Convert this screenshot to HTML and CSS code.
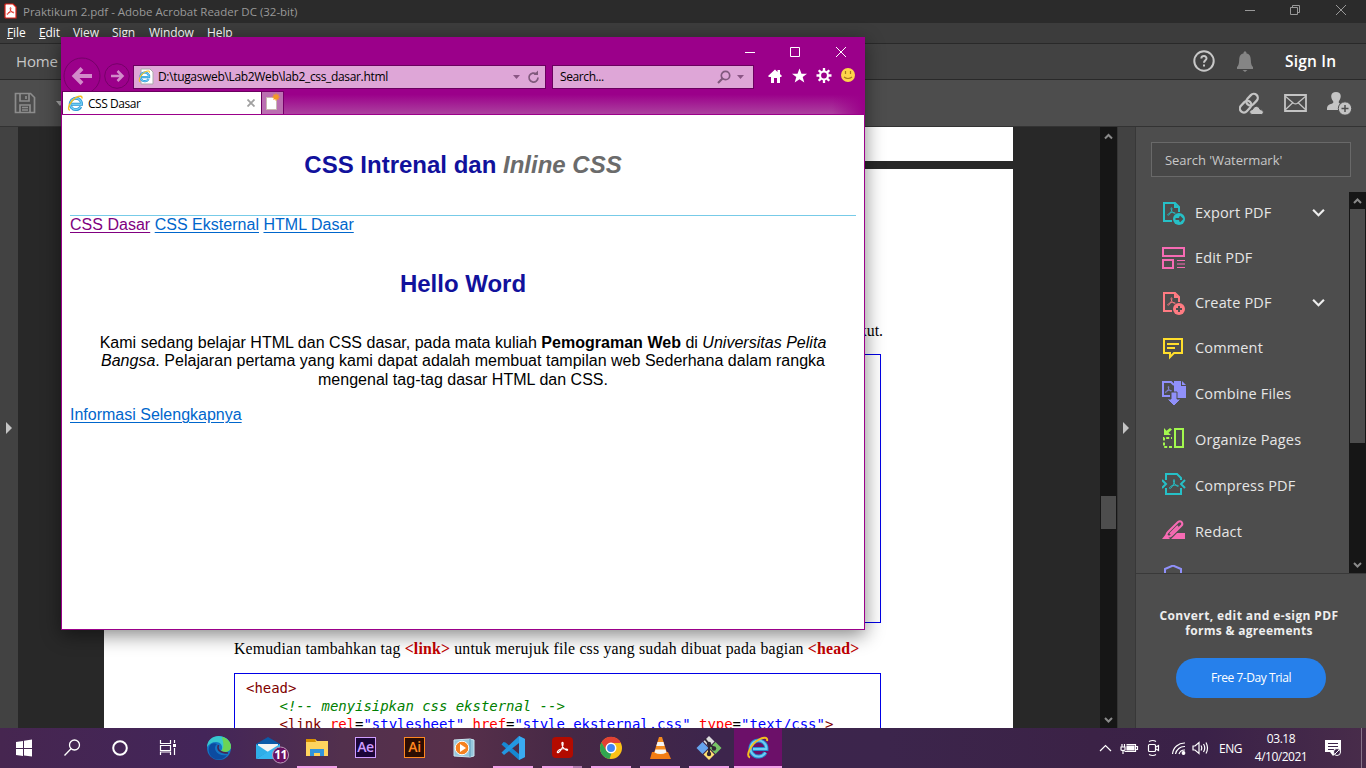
FILE: index.html
```html
<!DOCTYPE html>
<html lang="id">
<head>
<meta charset="utf-8">
<title>Desktop</title>
<link rel="stylesheet" href="styles.css">
</head>
<body>
<svg class="defs" width="0" height="0">
  <symbol id="ie" viewBox="0 0 24 24">
    <path d="M7 13h13.500A8 8 0 1 0 19.500 16.500" fill="none" stroke="#2590d2" stroke-width="4"/>
    <path d="M7 13h13.500A8 8 0 1 0 19.500 16.500" fill="none" stroke="#6fcdf4" stroke-width="2"/>
    <path d="M4 21.500C-1 20 5 8 13 3.500 18 .8 22 1 21 5" fill="none" stroke="#f5bf1e" stroke-width="2"/>
  </symbol>
  <symbol id="acro" viewBox="0 0 16 16">
    <path d="M2.500 12.500c1.500-2.500 5.200-3.800 10-2.800 1.800.5 1 1.800-.6 1C9.500 9.500 7.500 6.500 7.300 3.500c0-1.400 1.500-1.400 1.400.2C8.500 7 6 11.500 3.800 13.300c-.9.5-1.700.1-1.300-.8z" fill="none" stroke="currentColor" stroke-width="1.200"/>
  </symbol>
</svg>

<div class="titlebar">
  <svg width="13" height="16" viewBox="0 0 13 16"><path d="M2 1h7l3 3v11H2q-1 0-1-1V2q0-1 1-1z" fill="#fff" stroke="#e2231a" stroke-width="1.200"/><g color="#d91d14"><use href="#acro" x="1.500" y="3" width="10" height="10"/></g></svg>
  <span class="title-text">Praktikum 2.pdf - Adobe Acrobat Reader DC (32-bit)</span>
  <svg class="wctl" width="110" height="14" viewBox="0 0 110 14" fill="none" stroke="#999"><path d="M5 7.500h10M50.500 4.500h7v7h-7zM52.500 4.500v-2h7v7h-2M96 2l10 10M106 2L96 12"/></svg>
</div>
<div class="menubar">
  <span class="m-file"><u>F</u>ile</span><span class="m-edit"><u>E</u>dit</span><span class="m-view"><u>V</u>iew</span><span class="m-sign"><u>S</u>ign</span><span class="m-window"><u>W</u>indow</span><span><u>H</u>elp</span>
</div>
<div class="homebar">
  <span class="home">Home</span>
  <svg class="help" width="22" height="22" viewBox="0 0 22 22" fill="none" stroke="#c8c8c8" stroke-width="2"><circle cx="11" cy="11" r="9.700"/><path d="M8.300 8.500c.3-3.300 5.400-3.100 5.200 0-.1 1.700-2.500 1.900-2.500 4.200M11 14.500v2"/></svg>
  <svg class="bell" width="18" height="21" viewBox="0 0 18 21" fill="#858585"><path d="M9 0l1.500 1.500v1C14 3 14.700 6 14.800 9c.1 4 .8 5.600 2.200 7v2H1v-2c1.400-1.400 2.100-3 2.200-7C3.300 6 4 3 7.500 2.500v-1zM6.500 19h5L9 21z"/></svg>
  <span class="signin">Sign In</span>
</div>
<div class="toolbar">
  <svg width="22" height="22" viewBox="0 0 22 22" fill="none" stroke="#8c8c8c" stroke-width="1.700"><path d="M1.500 1.500h15l4 4v15h-19zM6 2v7h9V2M12 4v3M6 20v-7h10v7M8 15.500h6M8 18h6"/></svg>
  <svg class="caret" width="8" height="5" viewBox="0 0 8 5"><path d="M0 0h8L4 5z" fill="#aaa"/></svg>
  <span class="fill"></span>
  <svg width="25" height="23" viewBox="0 0 25 23" fill="none" stroke="#c4c4c4" stroke-width="2.300"><g transform="rotate(-47 10 11)"><rect x="-1.500" y="7" width="13" height="8" rx="4"/><rect x="8" y="7" width="13" height="8" rx="4"/></g><path d="M13 22.500q-2.600-.3-2.400-2.700.5-2.200 2.900-2.300 1-3 3.700-3.300 3.300.2 3.900 3.300 3.300.3 3.300 2.700-.1 2-1.600 2.300z" fill="#c4c4c4" stroke="#4d4d4d" stroke-width="1"/></svg>
  <svg class="mail" width="23" height="18" viewBox="0 0 23 18" fill="none" stroke="#c4c4c4" stroke-width="1.800"><path d="M1 1h21v16H1z"/><path d="M1 2l8.500 7.200q2 1.300 4 0L22 2M1 16l7.500-7M22 16l-7.500-7" stroke-width="1.300"/></svg>
  <svg class="user" width="25" height="23" viewBox="0 0 25 23" fill="#c4c4c4"><path d="M9 0c6 0 5.500 6 3 9-.8 1.500 0 2.500 2 3l1 6H0c0-4.500 1-5 4-6 2-.7 3-1.300 2-3C3.500 6 3 0 9 0z"/><circle cx="18" cy="16.500" r="6.700" stroke="#4d4d4d"/><path d="M18 13v7M14.500 16.500h7" stroke="#4d4d4d" stroke-width="1.500"/></svg>
</div>

<main class="workspace">
  <div class="rail rail-left"><i class="tri"></i></div>
  <div class="document">
    <div class="page page-first"></div>
    <div class="page page-second">
      <p class="tail">berikut.</p>
      <div class="codebox codebox-large"></div>
      <p class="instr">Kemudian tambahkan tag <b>&lt;link&gt;</b> untuk merujuk file css yang sudah dibuat pada bagian <b>&lt;head&gt;</b></p>
      <pre class="codebox codebox-small"><span class="tg">&lt;head&gt;</span>
    <em>&lt;!-- menyisipkan css eksternal --&gt;</em>
    <span class="tg">&lt;link</span> <span class="at">rel</span>=<span class="vl">"stylesheet"</span> <span class="at">href</span>=<span class="vl">"style_eksternal.css"</span> <span class="at">type</span>=<span class="vl">"text/css"</span><span class="tg">&gt;</span></pre>
    </div>
  </div>
  <div class="docscroll">
    <svg width="17" height="20" viewBox="0 0 17 20" fill="none" stroke="#8a8a8a" stroke-width="2"><path d="M5 11.500l3.500-3.500 3.500 3.500"/></svg>
    <i class="docthumb"></i>
    <svg width="17" height="20" viewBox="0 0 17 20" fill="none" stroke="#8a8a8a" stroke-width="2"><path d="M5 10l3.500 3.500L12 10"/></svg>
  </div>
  <div class="rail rail-right"><i class="tri"></i></div>
  <aside class="tools">
    <div class="toolsearch">Search 'Watermark'</div>
    <div class="toolmain">
      <div class="toollist">
        <div class="tool teal"><svg viewBox="0 0 24 24"><path d="M10 20H2V2h11l4 4v5M13 2v4h4" /><use href="#acro" x="4" y="5" width="11" height="11"/><circle cx="17" cy="18" r="6" class="solid"/><path d="M13.500 18h6M17.500 15.500L20 18l-2.500 2.500" class="cut"/></svg><span>Export PDF</span><svg class="down" viewBox="0 0 12 8"><path d="M1 1.500l5 5 5-5"/></svg></div>
        <div class="tool pink"><svg viewBox="0 0 24 24"><path d="M1 2h21v8H1zM1 14h10v8H1z"/><path d="M15 14.500h8M15 18h8M15 21.500h8" class="thin"/></svg><span>Edit PDF</span></div>
        <div class="tool coral"><svg viewBox="0 0 24 24"><path d="M10 20H2V2h11l4 4v5M13 2v4h4"/><use href="#acro" x="4" y="5" width="11" height="11"/><circle cx="17" cy="18" r="6" class="solid"/><path d="M14 18h6M17 15v6" class="cut"/></svg><span>Create PDF</span><svg class="down" viewBox="0 0 12 8"><path d="M1 1.500l5 5 5-5"/></svg></div>
        <div class="tool yellow"><svg viewBox="0 0 24 24"><path d="M2 3h18v14h-8l-4 4v-4H2zM5 8h12M5 12h8"/></svg><span>Comment</span></div>
        <div class="tool violet tall"><svg viewBox="0 0 24 24"><path d="M8 15H1V1h8l3 3"/><use href="#acro" x="2" y="4" width="9" height="9"/><path d="M12 0h7v5h5v12H12zM20 0l4 4h-4z" class="solid"/><path d="M9 11h6v7h4l-7 7-7-7h4z" class="solid halo"/></svg><span>Combine Files</span></div>
        <div class="tool lime tall"><svg viewBox="0 0 24 24"><path d="M13 2h8v18h-8z"/><path d="M10 20H2v-9h8" stroke-dasharray="3 1.800"/><path d="M2 1v7h7L6.500 5.700 10 2.500 8 1 4.500 3.700z" class="solid"/></svg><span>Organize Pages</span></div>
        <div class="tool teal tall"><svg viewBox="0 0 24 24"><path d="M4 7V1h11l4 4v2M4 15v6h15v-6M0 7l4 4-4 4M23 7l-4 4 4 4"/><use href="#acro" x="5.500" y="4.500" width="13" height="13"/></svg><span>Compress PDF</span></div>
        <div class="tool pink tall"><svg viewBox="0 0 24 24"><path d="M6 13L16 3q2-1.500 3.600 0 1.500 2 0 3.500L10 16q-2.500 2.500-4.500 1t.5-4zM8 15l8-8"/><path d="M0 20l4-5 4 5zM9 20l6-6h8v6z" class="solid"/></svg><span>Redact</span></div>
        <div class="tool violet tall partial"><svg viewBox="0 0 24 24"><path d="M3 14V4l8-3.500L19 4v10"/></svg><span>Protect</span></div>
      </div>
      <div class="toolscroll">
        <svg width="17" height="18" viewBox="0 0 17 18" fill="none" stroke="#8a8a8a" stroke-width="2"><path d="M5 11l3.500-3.500L12 11"/></svg>
        <i></i>
        <svg width="17" height="18" viewBox="0 0 17 18" fill="none" stroke="#8a8a8a" stroke-width="2"><path d="M5 8l3.500 3.500L12 8"/></svg>
      </div>
    </div>
    <div class="promo">
      <p>Convert, edit and e-sign PDF<br><span class="second">forms &amp; agreements</span></p>
      <div class="trial">Free 7-Day Trial</div>
    </div>
  </aside>
</main>

<section class="window">
  <div class="wtop">
    <svg width="110" height="14" viewBox="0 0 110 14" fill="none" stroke="#fff"><path d="M4 7.500h10M49.500 2.500h9v9h-9zM95 2l10 10M105 2L95 12"/></svg>
  </div>
  <div class="wnav">
    <svg class="arrows" width="72" height="38" viewBox="0 0 72 38" fill="none"><circle cx="20" cy="19" r="18" stroke="#760069"/><circle cx="55" cy="19" r="12.300" stroke="#760069"/><path d="M30 19H13M20 11.500l-7.500 7.500 7.500 7.500" stroke="#d28bca" stroke-width="4"/><path d="M49 19h11M55.500 14l5 5-5 5" stroke="#d28bca" stroke-width="2.500"/></svg>
    <div class="address">
      <svg width="16" height="18" viewBox="0 0 16 18"><path d="M3 1h9l3 3v12H3z" fill="#fff" stroke="#aaa"/><use href="#ie" x="0" y="2" width="13" height="13"/></svg>
      <span class="url">D:\tugasweb\Lab2Web\lab2_css_dasar.html</span>
      <svg class="end" width="28" height="14" viewBox="0 0 28 14"><path d="M1 5h7L4.500 9z" fill="#8a5685"/><path d="M24.500 4.200A4.500 4.500 0 1 0 26 7.500" fill="none" stroke="#80597d" stroke-width="1.700"/><path d="M21.500 5h4.500V.5z" fill="#80597d"/></svg>
    </div>
    <div class="search"><span class="hint">Search...</span><svg class="end" width="28" height="14" viewBox="0 0 28 14"><circle cx="8.500" cy="5.500" r="4.200" fill="none" stroke="#80597d" stroke-width="1.700"/><path d="M5.500 8.500L1 13" stroke="#80597d" stroke-width="2.200"/><path d="M20 5h7l-3.500 4z" fill="#8a5685"/></svg></div>
    <svg class="quick" width="90" height="16" viewBox="0 0 90 16" fill="#fff"><path d="M0 8l7-6.500L9.500 4V2H12v4l2 2-1 1h-1v6H9v-5H6v5H3V9H1z"/><path d="M31.500.5l2 5.300h5.500L34.700 9l1.600 5.500-4.800-3.300-4.800 3.300L28.300 9 24 5.800h5.500z"/><circle cx="56" cy="7.500" r="4" fill="none" stroke="#fff" stroke-width="2.200"/><path d="M56 0v3M56 12v3M48.500 7.500h3M60.500 7.500h3M50.700 2.200l2.200 2.200M59.100 10.600l2.200 2.200M50.700 12.800l2.200-2.200M59.100 4.400l2.200-2.200" stroke="#fff" stroke-width="2.300"/><circle cx="80" cy="7" r="7" fill="#ffd54a"/><path d="M77.500 3v3M82.500 3v3M76 9q4 3 8 0" fill="none" stroke="#a87a1c" stroke-width="1.200"/></svg>
  </div>
  <div class="tabs">
    <div class="tab"><svg width="17" height="17" viewBox="0 0 24 24"><use href="#ie"/></svg><span>CSS Dasar</span><svg class="x" width="8" height="8" viewBox="0 0 8 8"><path d="M.5.5l7 7M7.500.5l-7 7" stroke="#a0a0a0" stroke-width="1.800"/></svg></div>
    <div class="newtab"><svg width="16" height="18" viewBox="0 0 16 18"><path d="M2.500 4.500h10v12h-10z" fill="#fff" stroke="#c9b8b2"/><path d="M12 .5v7M8.500 4h7M9.500 1.500l5 5M14.500 1.500l-5 5" stroke="#f59a23" stroke-width="1.300"/></svg></div>
  </div>
  <article class="site">
    <h1>CSS Intrenal dan <i>Inline CSS</i></h1>
    <nav><a class="seen">CSS Dasar</a> <a>CSS Eksternal</a> <a>HTML Dasar</a></nav>
    <h2>Hello Word</h2>
    <p>Kami sedang belajar HTML dan CSS dasar, pada mata kuliah <b>Pemograman Web</b> di <i>Universitas Pelita Bangsa</i>. Pelajaran pertama yang kami dapat adalah membuat tampilan web Sederhana dalam rangka mengenal tag-tag dasar HTML dan CSS.</p>
    <a>Informasi Selengkapnya</a>
  </article>
</section>

<footer class="taskbar">
  <div class="sys">
    <svg viewBox="0 0 48 40" fill="#fff"><path d="M16 14l7-1v7h-7zM24 12.800l8-1.200V20h-8zM16 21h7v7l-7-1zM24 21h8v7.500L24 27.500z"/></svg>
    <svg viewBox="0 0 48 40" fill="none" stroke="#fff" stroke-width="1.300"><circle cx="26.500" cy="17" r="5"/><path d="M23 20.800L16.500 27.500"/></svg>
    <svg viewBox="0 0 48 40" fill="none" stroke="#fff" stroke-width="2"><circle cx="24" cy="20" r="6.800"/></svg>
    <svg viewBox="0 0 48 40" fill="none" stroke="#fff" stroke-width="1.200"><path d="M16.500 12v3.500h10V12M16.500 27v-3h10v3M16.500 17.500h10v5h-10zM30.500 12v3M30.500 20v7"/><path d="M29 16h3v3h-3z" fill="#fff" stroke="none"/></svg>
  </div>
  <div class="apps">
    <div class="app"><svg viewBox="0 0 48 40"><circle cx="24" cy="20" r="12" fill="#1475c4"/><path d="M12 19C13 4 34 5 36 18c0 6-7 7-10 5 3-4 0-9-5-9-4 0-7 2-9 5z" fill="#38c8cf"/><path d="M27 9c5 1 9 5 9 9.500 0 5.500-7 6.500-10 4.500 4-3 2-9 1-14z" fill="#6bd455"/><path d="M15 27c-4-9 2-14 7-11-5 4 0 13 10 11-4 6-13 6-17 0z" fill="#0c4ba0"/><path d="M23.500 17c-2 5 2 8 9.500 8" fill="none" stroke="#462653" stroke-width="1.600"/></svg></div>
    <div class="app"><svg viewBox="0 0 48 40"><path d="M12 16l12-7 12 7v14H12z" fill="#0b5aa8"/><path d="M14 16h20v8H14z" fill="#f4f4f4"/><path d="M12 16l12 8-12 7z" fill="#2faee8"/><path d="M36 16v15H12z" fill="#35b5ef"/><circle cx="36.500" cy="27" r="8" fill="#671061" stroke="#b99bb8"/></svg><span class="badge">11</span></div>
    <div class="app run"><svg viewBox="0 0 48 40"><path d="M13 11h9l2 2h11v15H13z" fill="#ffd45e"/><path d="M13 11h9l1 3H13z" fill="#d89000"/><path d="M17 21h14v7h-4v-3h-6v3h-4z" fill="#3295dc"/></svg></div>
    <div class="app"><span class="adobe ae">Ae</span></div>
    <div class="app"><span class="adobe ai">Ai</span></div>
    <div class="app"><svg viewBox="0 0 48 40"><path d="M14 12l16-1 4 1v16l-4 1-16-1z" fill="#96c7dd" stroke="#cce7f2"/><path d="M30 11v18" stroke="#5999bb"/><circle cx="22" cy="20" r="6.800" fill="#f58220" stroke="#fff"/><path d="M20 16l6 4-6 4z" fill="#fff"/></svg></div>
    <div class="app run"><svg viewBox="0 0 48 40"><path d="M30 8l6 3v18l-6 3-17.500-15.500 2-2.500 2 .5L30 26z" fill="#1688d2"/><path d="M30 8v7L15 27l-2.500-2.500z" fill="#2397e2"/><path d="M30 8l6 3v18l-6 3z" fill="#3aaaf1"/></svg></div>
    <div class="app run multi"><svg viewBox="0 0 48 40"><rect x="14" y="9" width="21" height="21" rx="4" fill="#b30b00"/><g color="#fff"><use href="#acro" x="17" y="12" width="15" height="15"/></g></svg></div>
    <div class="app run"><svg viewBox="0 0 48 40"><circle cx="24" cy="20" r="11" fill="#fbc116"/><path d="M14.500 14.500A11 11 0 0 1 34 15H24l-5 8z" fill="#e34133"/><path d="M14.500 14.500l5 8.500 5 2-2 6A11 11 0 0 1 14.500 14.500z" fill="#31a650"/><circle cx="24" cy="20" r="4.700" fill="#4285f4" stroke="#fff" stroke-width="1.500"/></svg></div>
    <div class="app run"><svg viewBox="0 0 48 40"><path d="M16 24h16l3 7H14z" fill="#f27c14"/><path d="M23 9h3l5 16q-6 3-13 0z" fill="#f58b1f"/><path d="M21.500 14h6l1 4h-8.200zM19.500 21.500h10l1 3q-6 3-12 0z" fill="#f5f5f5"/></svg></div>
    <div class="app run"><svg viewBox="0 0 48 40"><path d="M24 8l5.500 5.500-5.500 5.500-5.500-5.500z" fill="#ddd"/><path d="M30.500 14l6 6-6 6-6-6z" fill="#77c466"/><path d="M17.500 14l6 6-6 6-6-6z" fill="#66a4ed"/><path d="M24 21l5.500 5.500L24 32l-5.500-5.500z" fill="#ffe071"/><path d="M20 11l4 5v9M24 16l5 4" stroke="#302735" stroke-width="2" fill="none"/><g fill="#302735"><circle cx="24" cy="16" r="2.200"/><circle cx="29" cy="20.500" r="2.200"/><circle cx="24" cy="26" r="2.200"/></g></svg></div>
    <div class="app run active"><svg viewBox="0 0 48 40"><use href="#ie" x="12" y="8" width="24" height="24"/></svg></div>
  </div>
  <div class="tray">
    <svg width="110" height="20" viewBox="0 0 110 20" fill="none" stroke="#fff" stroke-width="1.200"><path d="M1 13l5.500-5.500L12 13"/><path d="M27.500 6.500h9v7h-11M36.500 8.500h2v3h-2M22 9v3q2 1 4 0V9zM23 6v3M25.500 6v3M24 13v3"/><path d="M28 8h7v4h-7z" fill="#fff"/><rect x="49.500" y="6.500" width="7" height="7" rx="1"/><path d="M57 9l2.500-1.500v5L57 11M50 3.500q4-2 7 0M50 16.500q4 2 7 0"/><path d="M73.500 16A12 12 0 0 1 86 5M76.500 16A9 9 0 0 1 86 8.500M80 16a6 6 0 0 1 6-4"/><circle cx="84.500" cy="15" r="1.300" fill="#fff"/><path d="M94 8v4h2l4 3.500v-11L96 8zM102 7.500q1.500 2.500 0 5M104.500 6q2.500 4 0 8M107 4.500q3 5.500 0 11"/></svg>
    <span class="lang">ENG</span>
    <div class="clock"><span>03.18</span><span class="date">4/10/2021</span></div>
    <svg class="note" width="17" height="17" viewBox="0 0 17 17"><path d="M0 0h16v12h-4l-4 4-3-4H0z" fill="#fff"/><path d="M3 3.500h10M3 6.500h10M3 9.500h6" stroke="#3c2449"/><circle cx="12" cy="12" r="3.500" fill="#3c2449" stroke="#fff"/><path d="M10 14l4-4" stroke="#fff"/></svg>
    <i class="peek"></i>
  </div>
</footer>
</body>
</html>
```
FILE: styles.css
```css
* { box-sizing: border-box; }
body {
  margin: 0; width: 1366px; height: 768px; overflow: hidden;
  display: flex; flex-direction: column; background: #282828;
  font-family: "Open Sans", "Noto Sans", sans-serif; font-size: 12px; color: #fff;
}
svg { display: block; flex: none; }
.defs { position: absolute; }
p, h1, h2, pre { margin: 0; }
span { white-space: nowrap; }
.fill { flex: 1; }

/* Acrobat chrome */
.titlebar { height: 23px; flex: none; background: #2b2b2b; display: flex; align-items: center; padding: 0 16px 1px 4px; }
.title-text { margin-left: 6px; color: #999; font-size: 11.5px; letter-spacing: -0.01px; }
.wctl { margin: -2px 0 0 auto; }
.menubar { height: 21px; flex: none; background: #3c3c3c; border-bottom: 1px solid #292929; display: flex; padding-left: 7px; line-height: 19px; letter-spacing: -0.1px; }
.m-file { width: 32px; }
.m-edit { width: 34px; }
.m-view { width: 39px; }
.m-sign { width: 37px; }
.m-window { width: 58px; }
.homebar { height: 36px; flex: none; background: #424242; border-bottom: 1px solid #292929; display: flex; align-items: center; padding: 0 26px 2px 16px; }
.home { font-size: 15px; color: #c8c8c8; letter-spacing: -0.15px; }
.help { margin-left: auto; }
.bell { margin: 1px 31px 0 21px; }
.signin { font-size: 15.5px; font-weight: 600; width: 55px; letter-spacing: 0.2px; }
.toolbar { height: 47px; flex: none; background: #4d4d4d; border-bottom: 1px solid #333; display: flex; align-items: center; padding: 0 14px; }
.caret { margin-left: 20px; }
.mail { margin-left: 20px; }
.user { margin-left: 20px; }

.workspace { height: 601px; flex: none; display: flex; overflow: hidden; }
.rail { flex: none; background: #424242; display: flex; align-items: center; }
.rail-left { width: 18px; padding-left: 6px; }
.rail-right { width: 19px; padding-left: 5px; border-left: 1px solid #353535; border-right: 1px solid #383838; }
.tri { border-left: 6px solid #c4c4c4; border-top: 6px solid transparent; border-bottom: 6px solid transparent; }
.document { width: 1082px; padding-left: 86px; background: #282828; }
.page { width: 909px; background: #fff; }
.page-first { height: 34px; margin-bottom: 8px; }
.page-second { height: 559px; padding-left: 130px; color: #000; font-family: "Liberation Serif", serif; }
.tail { width: 649px; padding-top: 152px; height: 185px; text-align: right; font-size: 15.8px; line-height: 20px; }
.codebox { width: 647px; border: 1px solid #0000e6; }
.codebox-large { height: 269px; }
.instr { font-size: 15.8px; line-height: 20px; padding-top: 16px; height: 50px; white-space: nowrap; letter-spacing: 0.19px; }
.instr b { color: #c00000; }
.codebox-small { height: 100px; padding: 5px 11px; font: 14px/18px "DejaVu Sans Mono", monospace; letter-spacing: -0.04px; }
.codebox-small em { color: #008000; }
.tg { color: #800000; }
.at { color: #f00; }
.vl { color: #00f; }

.docscroll { width: 17px; background: #161616; display: flex; flex-direction: column; }
.docthumb { height: 33px; margin: 349px 1px auto; background: #4d4d4d; }

/* Tool pane */
.tools { width: 230px; background: #4d4d4d; display: flex; flex-direction: column; }
.toolsearch { margin: 15px 15px 0; height: 35px; flex: none; border: 1px solid #696969; background: #474747; padding-left: 13px; line-height: 34px; font-size: 13px; color: #c8c8c8; letter-spacing: -0.05px; }
.toolmain { height: 397px; padding-top: 13px; display: flex; overflow: hidden; border-bottom: 1px solid #393939; }
.toollist { width: 213px; }
.tool { height: 45px; padding: 0 23px 0 26px; display: flex; align-items: center; font-size: 14.5px; color: #e6e6e6; }
.tall { height: 46px; }
.tool svg { width: 24px; height: 24px; fill: none; stroke: currentColor; stroke-width: 2; }
.tool span { margin: -1px auto 0 9px; color: #e6e6e6; letter-spacing: 0.15px; }
.tool.tall span { margin-top: 1px; }
.tool.partial span { margin-top: 6px; }
.tool .solid { fill: currentColor; stroke: none; }
.tool .halo { stroke: #4d4d4d; stroke-width: 1; }
.tool .cut { stroke: #4d4d4d; }
.tool .thin { stroke-width: 1.2; }
.tool .down { width: 13px; height: 9px; color: #eee; margin-right: 1px; }
.teal { color: #26c0c7; }
.pink { color: #f76bb4; }
.coral { color: #ff7b82; }
.yellow { color: #ffde2c; }
.violet { color: #9090fa; }
.lime { color: #a3f84e; }
.toolscroll { width: 17px; margin-top: 2px; background: #161616; display: flex; flex-direction: column; }
.toolscroll i { height: 234px; margin: -1px 1px auto; background: #4d4d4d; }
.promo { padding-top: 34px; text-align: center; }
.promo p { font-weight: 700; font-size: 12px; line-height: 15px; padding-right: 4px; letter-spacing: 0.4px; color: #eee; }
.second { letter-spacing: 0.3px; }
.trial { width: 150px; height: 40px; margin: 20px auto 0 40px; border-radius: 20px; background: #2680eb; line-height: 40px; font-size: 12px; letter-spacing: -0.45px; }

/* Browser window */
.window { position: absolute; left: 61px; top: 37px; width: 804px; height: 593px; border: 1px solid #9b008a; background: #9b008a; box-shadow: 0 5px 18px rgba(0,0,0,.48); color: #000; }
.wtop { height: 25px; display: flex; justify-content: flex-end; padding: 7px 13px 0 0; }
.wnav { height: 27px; display: flex; align-items: center; margin-bottom: 1px; }
.arrows { margin: -1px -1px 0 0; height: 38px; }
.address, .search { height: 24px; background: #dea6d7; border: 1px solid #6b005f; display: flex; align-items: center; }
.address { width: 413px; padding: 0 5px 0 4px; }
.url { margin-left: 4px; letter-spacing: -0.34px; }
.end { margin-left: auto; }
.search { width: 202px; margin-left: 6px; padding: 0 8px 0 7px; }
.hint { letter-spacing: -0.4px; }
.quick { margin: -2px 0 0 14px; }
.tabs { height: 24px; display: flex; border-bottom: 1px solid #9b008a; background: linear-gradient(90deg, transparent 96%, #9b008a), linear-gradient(#9b008a 15%, #ac419f); }
.tab { width: 200px; background: #fff; border: 1px solid #6b005f; border-width: 1px 1px 0 1px; display: flex; align-items: center; padding: 0 6px 0 4px; font-size: 12px; letter-spacing: -0.45px; }
.tab span { margin-left: 4px; }
.tab .x { margin-left: auto; }
.newtab { width: 22px; background: #bb6fb1; border: 1px solid #760069; border-width: 1px 1px 0 0; padding: 1px 2px; }
.site { height: 514px; background: #fff; padding: 8px 8px 0; font: 16px/18.4px "Liberation Sans", Arial, sans-serif; }
.site h1 { height: 93px; border-bottom: 1px solid #77cbe8; text-align: center; padding-top: 28px; font-size: 24px; line-height: 27px; color: #11119c; }
.site h1 i { color: #6b6b6b; }
.site h2 { text-align: center; font-size: 24px; line-height: 27px; color: #11119c; padding: 35px 0 37px; }
.site nav { height: 19px; letter-spacing: 0.02px; }
.site p { text-align: center; padding: 0 20px; margin-bottom: 17px; letter-spacing: 0.02px; }
.site a { color: #0066cc; text-decoration: underline; text-underline-offset: 2px; }
.site .seen { color: #800080; }

/* Taskbar */
.taskbar { height: 40px; flex: none; display: flex; background: linear-gradient(90deg, #462650, #432559 15%, #52304d 25%, #58304b 33%, #452845 42%, #3d254c 52%, #3c254c 65%, #3b2246 80%, #3a2148 88%, #482c4a); }
.sys { display: flex; width: 195px; }
.sys svg, .app svg { width: 48px; height: 40px; }
.apps { display: flex; gap: 1px; }
.app { position: relative; width: 48px; height: 40px; }
.run::after { content: ""; position: absolute; left: 4px; right: 4px; bottom: 0; height: 2px; background: #f2a0e8; }
.multi::after { background: linear-gradient(90deg, #f2a0e8 31px, #b57bb1 31px); }
.active { background: #6c1069; }
.active::after { left: 0; right: 0; }
.badge { position: absolute; left: 28px; top: 19px; width: 17px; text-align: center; font: 700 12px/16px "Open Sans", sans-serif; letter-spacing: -0.5px; }
.adobe { display: block; width: 21px; height: 21px; margin: 9px 0 0 13px; border: 1.5px solid; text-align: center; font: 600 14px/17px "Open Sans", sans-serif; letter-spacing: -0.4px; }
.ae { color: #cf9cff; background: #1b0638; }
.ai { color: #ff8720; background: #2c0d02; }
.tray { margin-left: auto; width: 268px; display: flex; align-items: center; letter-spacing: -0.45px; }
.tray > svg:first-child { margin-left: 1px; }
.lang { margin-left: 10px; width: 24px; }
.clock { width: 60px; margin: -1px 0 0 8px; display: flex; flex-direction: column; align-items: center; line-height: 18px; }
.date { letter-spacing: -0.5px; }
.note { margin-left: 14px; }
.peek { width: 1px; height: 40px; background: #887589; margin-left: auto; margin-right: 4px; }
```
